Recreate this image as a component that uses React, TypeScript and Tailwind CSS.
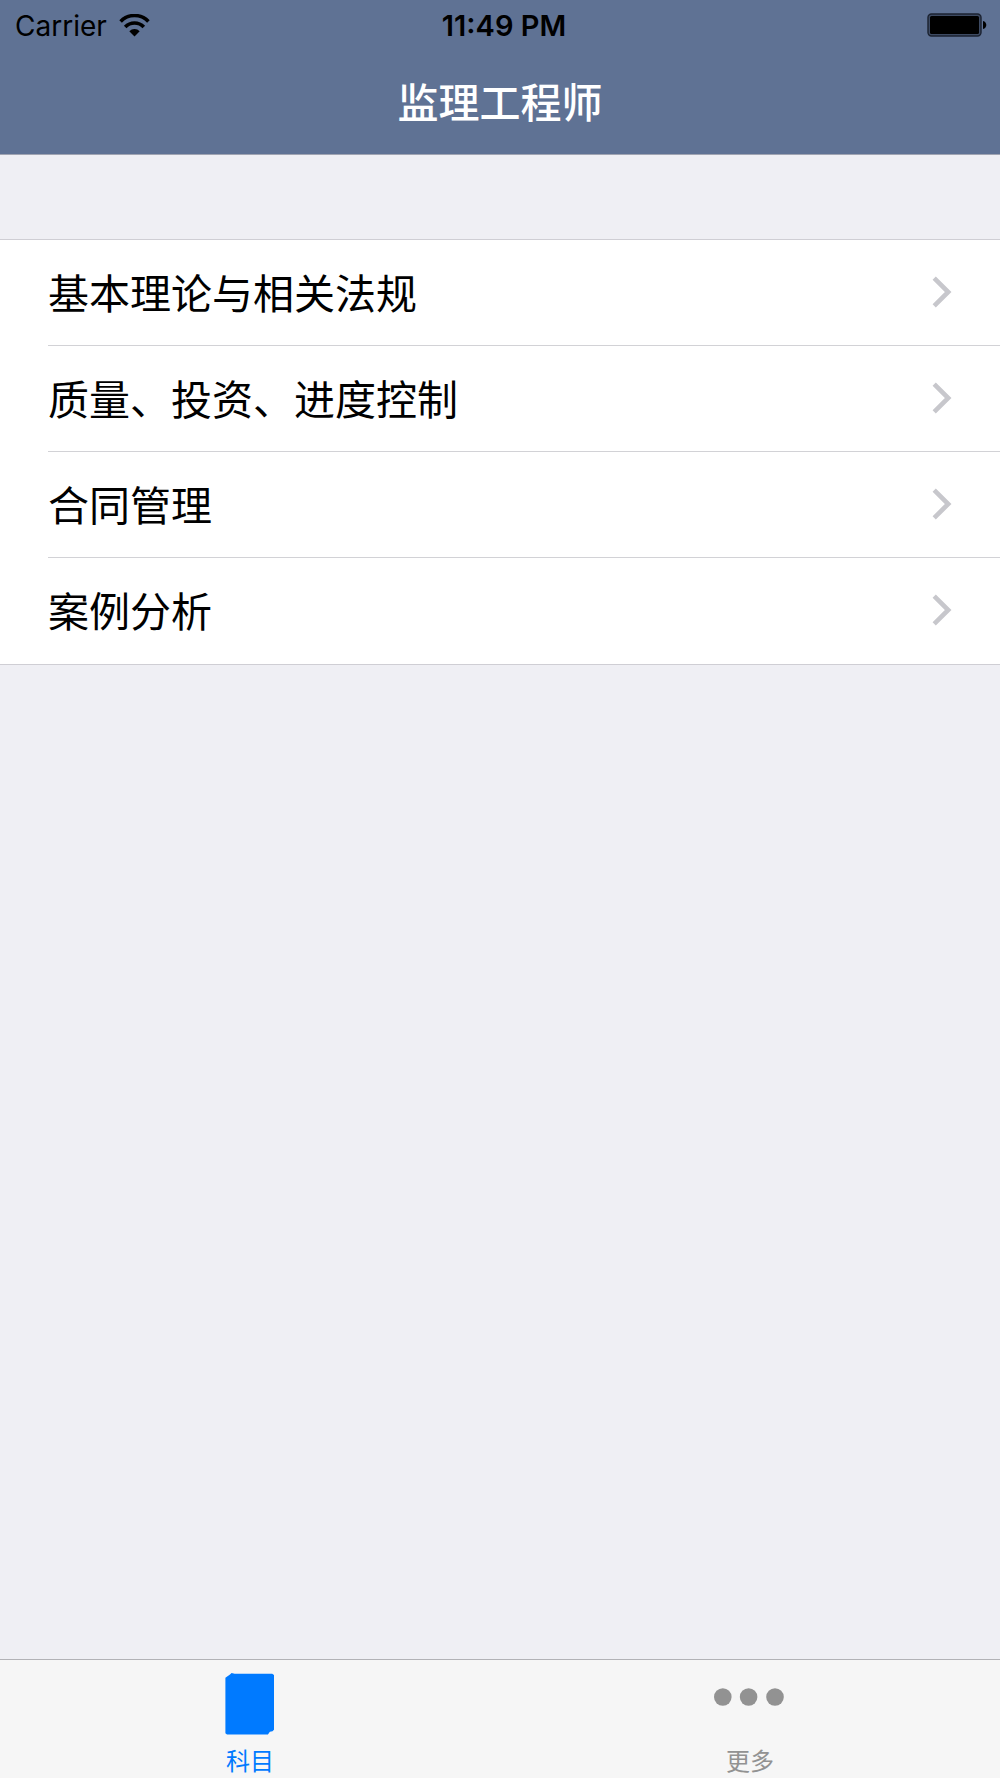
const subjects = ['基本理论与相关法规', '质量、投资、进度控制', '合同管理', '案例分析'];

function WifiIcon() {
  return (
    <svg className="h-[23px] w-[31px]" viewBox="0 0 31 23" fill="none" stroke="#000" strokeWidth="3.6" aria-hidden="true">
      <path d="M1.6 7.4a19.4 19.4 0 0 1 27.8 0" />
      <path d="M6.2 12.9a12.9 12.9 0 0 1 18.6 0" />
      <path d="M15.5 22.4l-5.2-5.2a7.2 7.2 0 0 1 10.4 0z" fill="#000" stroke="none" />
    </svg>
  );
}

function BatteryIcon() {
  return (
    <svg className="h-6 w-[60px]" viewBox="0 0 60 24" aria-label="Battery full" role="img">
      <rect x="1" y="1" width="53" height="22" rx="3.5" fill="#3d4a62" stroke="#1b2230" strokeWidth="1.4" />
      <rect x="3" y="3" width="49" height="18" rx="1.5" fill="#000" />
      <path d="M56 8c4.4 1 4.4 7 0 8z" fill="#000" />
    </svg>
  );
}

function Chevron() {
  return (
    <svg className="mb-0.5 h-8 w-5" viewBox="0 0 20 32" fill="none" stroke="#c7c7cc" strokeWidth="4.6" aria-hidden="true">
      <path d="M2.2 2.2L16.2 16L2.2 29.8" />
    </svg>
  );
}

function BookIcon() {
  return (
    <svg className="h-16 w-[50px]" viewBox="0 0 50 64" aria-hidden="true">
      <path
        d="M5 2.4L6.6 1l3 .8h37.6l1.8 1.3v54.6l-1.5 1.6-2.6.5-2 2.6H2L.4 61.2V5.8z"
        fill="#007aff"
      />
    </svg>
  );
}

function MoreIcon() {
  return (
    <svg className="h-16 w-[72px]" viewBox="0 0 72 64" fill="#929292" aria-hidden="true">
      <circle cx="8.8" cy="25" r="8.8" />
      <circle cx="34.6" cy="25" r="8.8" />
      <circle cx="61" cy="25" r="8.8" />
    </svg>
  );
}

export default function App() {
  return (
    <div className="flex min-h-screen flex-col bg-[#efeff4] font-['Inter','Noto_Sans_CJK_SC',sans-serif] text-black">
      <header className="border-b border-[#a0a4b2] bg-[#5f7294]">
        <div className="grid h-[50px] grid-cols-[1fr_auto_1fr] items-center pr-[13px] pl-[15px]">
          <div className="flex items-center gap-3">
            <span className="pt-0.5 text-[28px]">Carrier</span>
            <WifiIcon />
          </div>
          <time className="pt-0.5 pl-1.5 text-[29px] font-semibold">11:49 PM</time>
          <div className="flex justify-end">
            <BatteryIcon />
          </div>
        </div>
        <h1 className="flex h-[104px] items-center justify-center pt-1 text-[41px] font-medium text-white">监理工程师</h1>
      </header>

      <main className="flex-1 pt-[84px]">
        <ul className="border-y border-[#cfced4] bg-white">
          {subjects.map((name) => (
            <li key={name} className="group pl-12">
              <button
                type="button"
                className="flex h-[106px] w-full items-center justify-between border-b border-[#d2d2d6] pr-12 text-left text-[41px] group-last:border-b-0"
              >
                <span className="pt-1">{name}</span>
                <Chevron />
              </button>
            </li>
          ))}
        </ul>
      </main>

      <nav className="grid grid-cols-2 border-t border-[#b2b2b6] bg-[#f6f6f6]">
        <button type="button" aria-current="page" className="flex flex-col items-center pt-3 text-2xl text-[#007aff]">
          <BookIcon />
          <span className="mt-2 h-[34px] leading-9">科目</span>
        </button>
        <button type="button" className="flex flex-col items-center pt-3 text-2xl text-[#929292]">
          <MoreIcon />
          <span className="mt-2 h-[34px] leading-9">更多</span>
        </button>
      </nav>
    </div>
  );
}
